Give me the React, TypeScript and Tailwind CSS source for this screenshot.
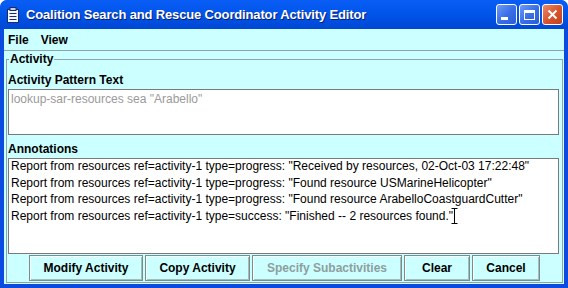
import React from "react";

const F = { fontFamily: '"Liberation Sans", Arial, sans-serif' };

function TitleIcon() {
  return (
    <svg width="14" height="16" viewBox="0 0 14 16" className="shrink-0">
      <rect x="1.5" y="2.5" width="11" height="13" fill="#f4f6ff" stroke="#1a2a6a" />
      <rect x="4" y="0.5" width="6" height="3" fill="#c8d0e8" stroke="#1a2a6a" />
      <line x1="3.5" y1="6.5" x2="10.5" y2="6.5" stroke="#1a2a6a" />
      <line x1="3.5" y1="9.5" x2="10.5" y2="9.5" stroke="#1a2a6a" />
      <line x1="3.5" y1="12.5" x2="10.5" y2="12.5" stroke="#1a2a6a" />
    </svg>
  );
}

function CapButton({ kind }: { kind: "min" | "max" | "close" }) {
  const bg =
    kind === "close"
      ? "bg-gradient-to-br from-[#e98a6a] via-[#d9552e] to-[#c2401c]"
      : "bg-gradient-to-br from-[#6f9cf8] via-[#3a6fe8] to-[#2a5cd8]";
  return (
    <div
      className={`w-[21px] h-[21px] rounded-[3px] border border-white ${bg} flex items-center justify-center`}
    >
      {kind === "min" && (
        <div className="w-[7px] h-[3px] bg-white mt-[8px] -ml-[4px]" />
      )}
      {kind === "max" && (
        <div className="w-[11px] h-[10px] border border-white border-t-[3px]" />
      )}
      {kind === "close" && (
        <svg width="11" height="11" viewBox="0 0 11 11">
          <path d="M1.5 1.5 L9.5 9.5 M9.5 1.5 L1.5 9.5" stroke="white" strokeWidth="2" />
        </svg>
      )}
    </div>
  );
}

function Btn({ w, label, disabled }: { w: number; label: string; disabled?: boolean }) {
  return (
    <div
      style={{ width: w }}
      className={`h-[26px] border border-[#7a8c8c] shadow-[inset_1px_1px_0_#ffffff,inset_-1px_-1px_0_#a6bcbc] bg-[#ccffff] flex items-center justify-center text-[12px] font-bold ${
        disabled ? "text-[#8e9e9e]" : "text-black"
      }`}
    >
      {label}
    </div>
  );
}

export default function App() {
  const lines = [
    'Report from resources ref=activity-1 type=progress: "Received by resources, 02-Oct-03 17:22:48"',
    'Report from resources ref=activity-1 type=progress: "Found resource USMarineHelicopter"',
    'Report from resources ref=activity-1 type=progress: "Found resource ArabelloCoastguardCutter"',
    'Report from resources ref=activity-1 type=success: "Finished -- 2 resources found."',
  ];
  return (
    <div style={F} className="w-[568px] h-[288px] bg-[#0b4be0] rounded-t-[7px] flex flex-col overflow-hidden">
      {/* Title bar */}
      <div className="h-[29px] shrink-0 flex items-center pl-[6px] pr-[5px] bg-gradient-to-b from-[#0a5ef6] via-[#0054e8] to-[#0147d4] rounded-t-[7px]">
        <TitleIcon />
        <div className="ml-[6px] text-white font-bold text-[13px] tracking-[-0.15px] [text-shadow:1px_1px_0_#0a1e6e] flex-1">
          Coalition Search and Rescue Coordinator Activity Editor
        </div>
        <div className="flex gap-[2px]">
          <CapButton kind="min" />
          <CapButton kind="max" />
          <CapButton kind="close" />
        </div>
      </div>
      {/* Client */}
      <div className="flex-1 mx-[4px] mb-[4px] bg-[#ccffff] flex flex-col">
        <div className="h-[22px] shrink-0 flex items-center gap-[12px] pl-[4px] text-[12px] font-bold text-black border-b border-[#8da5a5]">
          <span>File</span>
          <span>View</span>
        </div>
        <div className="flex-1 pt-[8px] pl-[2px] pr-[1px] pb-[1px] flex flex-col">
          <div className="relative flex-1 border border-[#8da5a5] flex flex-col px-[1px]">
            <div className="absolute left-[2px] -top-[9px] px-[1px] bg-[#ccffff] text-[12px] font-bold text-black leading-[16px]">
              Activity
            </div>
            <div className="mt-[12px] text-[12px] font-bold text-black leading-[16px]">
              Activity Pattern Text
            </div>
            <div className="mt-[1px] mr-[2px] h-[46px] shrink-0 bg-white border border-[#7a7a7a] px-[2px] pt-[1px] text-[12px] leading-[16px] text-[#9a9a9a]">
              lookup-sar-resources sea "Arabello"
            </div>
            <div className="mt-[6px] text-[12px] font-bold text-black leading-[16px]">Annotations</div>
            <div className="relative mt-[1px] mr-[2px] flex-1 bg-white border border-[#7a7a7a] px-[2px] text-[12px] leading-[16.5px] text-black">
              <div className="-mt-[1px]">
                {lines.map((l, i) => (
                  <div key={i} className="whitespace-nowrap">
                    {l}
                  </div>
                ))}
              </div>
              <svg className="absolute left-[442px] top-[49px]" width="7" height="16" viewBox="0 0 7 16">
                <path d="M0.5 0.5 H6.5 M3.5 0.5 V15.5 M0.5 15.5 H6.5" stroke="black" strokeWidth="1" fill="none" />
              </svg>
            </div>
            <div className="flex justify-center gap-[2px] pt-[1px] pb-[1px] shrink-0">
              <Btn w={114} label="Modify Activity" />
              <Btn w={105} label="Copy Activity" />
              <Btn w={150} label="Specify Subactivities" disabled />
              <Btn w={66} label="Clear" />
              <Btn w={68} label="Cancel" />
            </div>
          </div>
        </div>
      </div>
    </div>
  );
}
